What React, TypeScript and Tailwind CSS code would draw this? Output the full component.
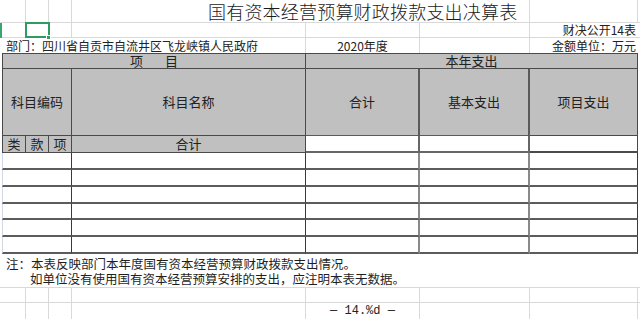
import type { ReactNode } from "react";

// 表格底部数据行数
const DATA_ROWS = [0, 1, 2, 3, 4, 5];

function Cell({ className = "", children }: { className?: string; children?: ReactNode }) {
  return (
    <div className={`flex items-center whitespace-nowrap overflow-visible ${className}`}>{children}</div>
  );
}

export default function App() {
  return (
    <div
      className="w-[640px] h-[319px] overflow-hidden bg-white text-[#222] text-[12px] leading-[14px]"
      style={{ fontFamily: '"Noto Sans CJK SC", "Noto Sans", sans-serif' }}
    >
      <div className="grid grid-cols-[2px_24px_23px_23px_234px_114px_110px_108px_2px] grid-rows-[23px_15px_15px_16px_67px_17px_17px_17px_17px_16px_17px_17px_34px_15px_16px]">
        {/* 第1行：标题 */}
        <Cell className="border-b border-[#d9d9d9]" />
        <Cell className="border-r border-b border-[#d9d9d9]" />
        <Cell className="border-r border-b border-[#d9d9d9]" />
        <Cell className="border-r border-b border-[#d9d9d9]" />
        <Cell className="col-span-3 border-r border-b border-[#d9d9d9] pl-[136px] text-[18px] leading-[22px] font-light tracking-[0.2px] text-[#1a1a1a]">
          国有资本经营预算财政拨款支出决算表
        </Cell>
        <Cell className="border-r border-b border-[#d9d9d9]" />
        <Cell className="border-b border-[#d9d9d9]" />

        {/* 第2行 */}
        <Cell className="border-l-2 border-[#3aa573]" />
        <Cell className="border-r border-b border-[#d9d9d9]" />
        <Cell className="relative border-r border-b border-[#d9d9d9]">
          <div className="absolute -top-[1px] -left-[1px] w-[25px] h-[16px] border-2 border-[#2f9a62]" />
          <div className="absolute -bottom-[3px] -right-[3px] w-[5px] h-[5px] bg-[#2f9a62] border border-white" />
        </Cell>
        <Cell className="border-r border-b border-[#d9d9d9]" />
        <Cell className="border-r border-b border-[#d9d9d9]" />
        <Cell className="border-r border-b border-[#d9d9d9]" />
        <Cell className="border-r border-b border-[#d9d9d9]" />
        <Cell className="justify-end pr-[2px] border-b border-[#d9d9d9]">财决公开14表</Cell>
        <Cell className="border-b border-[#d9d9d9]" />

        {/* 第3行：部门 */}
        <Cell />
        <Cell className="col-span-4 pl-[4px] border-r border-[#d9d9d9]">
          部门：四川省自贡市自流井区飞龙峡镇人民政府
        </Cell>
        <Cell className="justify-center border-r border-[#d9d9d9]">2020年度</Cell>
        <Cell className="border-r border-[#d9d9d9]" />
        <Cell className="justify-end pr-[2px]">金额单位：万元</Cell>
        <Cell />

        {/* 表头：项目 / 本年支出 */}
        <Cell />
        <Cell className="col-span-4 justify-center bg-[#c0c0c0] border-t border-l border-r border-b border-[#4a4a4a] text-[13px]">
          <span>项</span>
          <span className="ml-[22px]">目</span>
        </Cell>
        <Cell className="col-span-3 justify-center bg-[#c0c0c0] border-t border-r border-b border-[#4a4a4a] text-[13px]">
          本年支出
        </Cell>
        <Cell />

        {/* 表头：科目编码 / 科目名称 / 合计 ... */}
        <Cell />
        <Cell className="col-span-3 justify-center bg-[#c0c0c0] border-l border-r border-b border-[#4a4a4a] text-[13px]">
          科目编码
        </Cell>
        <Cell className="justify-center bg-[#c0c0c0] border-r border-b border-[#4a4a4a] text-[13px]">科目名称</Cell>
        <Cell className="justify-center bg-[#c0c0c0] border-r-2 border-b border-[#5a5a5a] text-[13px]">合计</Cell>
        <Cell className="justify-center bg-[#c0c0c0] border-r-2 border-b border-[#5a5a5a] text-[13px]">基本支出</Cell>
        <Cell className="justify-center bg-[#c0c0c0] border-r border-b border-[#4a4a4a] text-[13px]">项目支出</Cell>
        <Cell />

        {/* 类 款 项 / 合计 */}
        <Cell />
        <Cell className="justify-center bg-[#c0c0c0] border-l border-r border-b border-[#4a4a4a] text-[13px]">类</Cell>
        <Cell className="justify-center bg-[#c0c0c0] border-r border-b border-[#4a4a4a] text-[13px]">款</Cell>
        <Cell className="justify-center bg-[#c0c0c0] border-r border-b border-[#4a4a4a] text-[13px]">项</Cell>
        <Cell className="justify-center bg-[#c0c0c0] border-r border-b border-[#4a4a4a] text-[13px]">合计</Cell>
        <Cell className="border-r-2 border-b-2 border-[#666]" />
        <Cell className="border-r-2 border-b-2 border-[#666]" />
        <Cell className="border-r border-b-2 border-[#4a4a4a]" />
        <Cell />

        {/* 数据行 */}
        {DATA_ROWS.map((i) => (
          <div key={i} className="contents">
            <Cell />
            <Cell className="col-span-3 border-l border-l-[#cfd8e3] border-r border-b-2 border-r-[#3a3a3a] border-b-[#5c5c5c]" />
            <Cell className="border-r border-b-2 border-r-[#3a3a3a] border-b-[#5c5c5c]" />
            <Cell className="border-r-2 border-b-2 border-r-[#8a8a8a] border-b-[#5c5c5c]" />
            <Cell className="border-r-2 border-b-2 border-r-[#8a8a8a] border-b-[#5c5c5c]" />
            <Cell className="border-r border-b-2 border-r-[#3a3a3a] border-b-[#5c5c5c]" />
            <Cell />
          </div>
        ))}

        {/* 注释 */}
        <Cell className="col-span-9 flex-col !items-start justify-center pt-[1px] pl-[6px] border-b border-[#d9d9d9] text-[12.5px] leading-[15px] text-[#1f1f1f]">
          <span>注：本表反映部门本年度国有资本经营预算财政拨款支出情况。</span>
          <span className="pl-[24px]">如单位没有使用国有资本经营预算安排的支出，应注明本表无数据。</span>
        </Cell>

        {/* 底部空行 */}
        <Cell className="border-b border-[#d9d9d9]" />
        <Cell className="border-r border-b border-[#d9d9d9]" />
        <Cell className="border-r border-b border-[#d9d9d9]" />
        <Cell className="border-r border-b border-[#d9d9d9]" />
        <Cell className="border-r border-b border-[#d9d9d9]" />
        <Cell className="border-r border-b border-[#d9d9d9]" />
        <Cell className="border-r border-b border-[#d9d9d9]" />
        <Cell className="border-r border-b border-[#d9d9d9]" />
        <Cell className="border-b border-[#d9d9d9]" />

        <Cell />
        <Cell className="border-r border-[#d9d9d9]" />
        <Cell className="border-r border-[#d9d9d9]" />
        <Cell className="border-r border-[#d9d9d9]" />
        <Cell className="border-r border-[#d9d9d9]" />
        <Cell className="justify-center border-r border-[#d9d9d9] text-[12px]">
          <span style={{ fontFamily: '"Liberation Mono", "Noto Sans CJK SC", monospace' }}>— 14.%d —</span>
        </Cell>
        <Cell className="border-r border-[#d9d9d9]" />
        <Cell className="border-r border-[#d9d9d9]" />
        <Cell />
      </div>
    </div>
  );
}
